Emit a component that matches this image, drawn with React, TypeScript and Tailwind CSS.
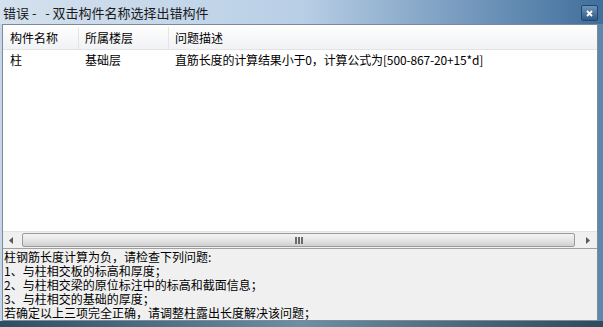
import React from "react";

const font = { fontFamily: '"Noto Sans CJK SC", "Liberation Sans", sans-serif' };

const lines = [
  "柱钢筋长度计算为负，请检查下列问题:",
  "1、与柱相交板的标高和厚度；",
  "2、与柱相交梁的原位标注中的标高和截面信息；",
  "3、与柱相交的基础的厚度；",
  "若确定以上三项完全正确，请调整柱露出长度解决该问题；",
];

function ScrollBar() {
  return (
    <div className="h-[17px] flex items-stretch bg-[#f0f0f0] border-t border-[#e3e3e3]">
      <div className="w-[17px] flex items-center justify-center">
        <svg width="5" height="7" viewBox="0 0 5 7">
          <path d="M4 0 L0 3.5 L4 7 Z" fill="#5a5a5a" />
        </svg>
      </div>
      <div className="flex-1 my-[1px] ml-[2px] mr-[2px] rounded-[2px] border border-[#9a9a9a] bg-gradient-to-b from-[#f3f3f3] via-[#e6e6e6] to-[#cfcfcf] flex items-center justify-center">
        <div className="flex gap-[1px]">
          <span className="w-[2px] h-[7px] bg-[#6d6d6d]" />
          <span className="w-[2px] h-[7px] bg-[#6d6d6d]" />
          <span className="w-[2px] h-[7px] bg-[#6d6d6d]" />
        </div>
      </div>
      <div className="w-[20px] flex items-center justify-center">
        <svg width="5" height="7" viewBox="0 0 5 7">
          <path d="M1 0 L5 3.5 L1 7 Z" fill="#5a5a5a" />
        </svg>
      </div>
    </div>
  );
}

export default function App() {
  return (
    <div
      className="w-[603px] h-[327px] overflow-hidden flex flex-col bg-gradient-to-r from-[#c6d6e8] via-[#a8c0da] to-[#5d86ad] text-[12px] text-black"
      style={font}
    >
      {/* title bar */}
      <div className="h-[25px] flex items-center justify-between pl-[3px] pr-[5px] bg-gradient-to-r from-[#d4e1ee] via-[#b9cfe6] to-[#3f6f9c]">
        <span className="text-[13px] text-[#1a1a1a] leading-none whitespace-pre">错误 -   - 双击构件名称选择出错构件</span>
        <div className="w-[17px] h-[16px] mt-[2px] rounded-[2px] border border-[#25476b] bg-gradient-to-b from-[#6f93b8] to-[#2f5a85] flex items-center justify-center">
          <svg width="7" height="7" viewBox="0 0 7 7">
            <path d="M1 1 L6 6 M6 1 L1 6" stroke="#fff" strokeWidth="1.8" />
          </svg>
        </div>
      </div>

      {/* client area */}
      <div className="flex-1 ml-[2px] mr-[5px] flex flex-col border border-[#7d8a99] bg-[#f0f0f0]">
        {/* list view */}
        <div className="h-[224px] flex flex-col bg-white border-b border-[#a0a0a0]">
          <div className="h-[25px] pt-[2px] flex items-center bg-gradient-to-b from-white to-[#f1f2f4] border-b border-[#e2e3e5]">
            <div className="w-[76px] h-full flex items-center pl-[7px] border-r border-[#e4e5e7]">构件名称</div>
            <div className="w-[90px] h-full flex items-center pl-[6px] border-r border-[#e4e5e7]">所属楼层</div>
            <div className="flex-1 h-full flex items-center pl-[6px]">问题描述</div>
          </div>
          <div className="h-[20px] flex items-center">
            <div className="w-[76px] pl-[7px]">柱</div>
            <div className="w-[90px] pl-[6px]">基础层</div>
            <div className="flex-1 pl-[6px] tracking-[-0.15px]">直筋长度的计算结果小于0，计算公式为[500-867-20+15*d]</div>
          </div>
          <div className="flex-1" />
          <ScrollBar />
        </div>

        {/* message */}
        <div className="flex-1 pl-[1px] pt-[1px] text-[12px] leading-[14px]">
          {lines.map((l) => (
            <div key={l}>{l}</div>
          ))}
        </div>
      </div>

      <div className="h-[6px] bg-gradient-to-r from-[#2d4e63] via-[#6d8fa3] to-[#2c4b5c]" />
    </div>
  );
}
